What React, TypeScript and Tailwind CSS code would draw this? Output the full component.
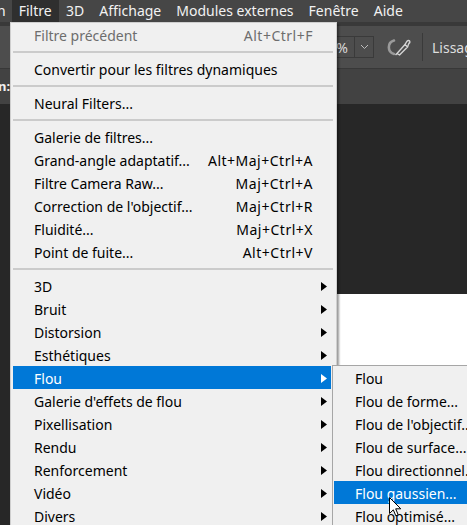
import React from 'react'

// Menu Filtre de Photoshop, sous-menu Flou ouvert

type Item =
    | { kind: 'sep' }
    | { kind: 'item'; label: string; shortcut?: string; sub?: boolean; disabled?: boolean; active?: boolean }

const mainItems: Item[] = [
    { kind: 'item', label: 'Filtre précédent', shortcut: 'Alt+Ctrl+F', disabled: true },
    { kind: 'sep' },
    { kind: 'item', label: 'Convertir pour les filtres dynamiques' },
    { kind: 'sep' },
    { kind: 'item', label: 'Neural Filters...' },
    { kind: 'sep' },
    { kind: 'item', label: 'Galerie de filtres...' },
    { kind: 'item', label: 'Grand-angle adaptatif...', shortcut: 'Alt+Maj+Ctrl+A' },
    { kind: 'item', label: 'Filtre Camera Raw...', shortcut: 'Maj+Ctrl+A' },
    { kind: 'item', label: "Correction de l'objectif...", shortcut: 'Maj+Ctrl+R' },
    { kind: 'item', label: 'Fluidité...', shortcut: 'Maj+Ctrl+X' },
    { kind: 'item', label: 'Point de fuite...', shortcut: 'Alt+Ctrl+V' },
    { kind: 'sep' },
    { kind: 'item', label: '3D', sub: true },
    { kind: 'item', label: 'Bruit', sub: true },
    { kind: 'item', label: 'Distorsion', sub: true },
    { kind: 'item', label: 'Esthétiques', sub: true },
    { kind: 'item', label: 'Flou', sub: true, active: true },
    { kind: 'item', label: "Galerie d'effets de flou", sub: true },
    { kind: 'item', label: 'Pixellisation', sub: true },
    { kind: 'item', label: 'Rendu', sub: true },
    { kind: 'item', label: 'Renforcement', sub: true },
    { kind: 'item', label: 'Vidéo', sub: true },
    { kind: 'item', label: 'Divers', sub: true },
]

const blurItems = [
    'Flou',
    'Flou de forme...',
    "Flou de l'objectif...",
    'Flou de surface...',
    'Flou directionnel...',
    'Flou gaussien...',
    'Flou optimisé...',
]

const menuBar = ['Filtre', '3D', 'Affichage', 'Modules externes', 'Fenêtre', 'Aide']

function SubArrow({ white }: { white?: boolean }) {
    return (
        <svg width="6" height="9" viewBox="0 0 6 9" className="mr-[4px] shrink-0">
            <polygon points="0,0 6,4.5 0,9" fill={white ? '#ffffff' : '#000000'} />
        </svg>
    )
}

function Cursor() {
    return (
        <svg width="13" height="20" viewBox="0 0 13 20" className="absolute left-[389px] top-[497px]">
            <path
                d="M0.5 0.5 L0.5 16.5 L4.3 12.8 L6.8 18.8 L9.2 17.8 L6.7 11.8 L11.8 11.8 Z"
                fill="#ffffff"
                stroke="#000000"
                strokeWidth="1"
                strokeLinejoin="miter"
            />
        </svg>
    )
}

function PressureIcon() {
    return (
        <svg width="24" height="18" viewBox="0 0 24 18" fill="none" className="shrink-0">
            <path d="M7 2.5 A7 7 0 0 0 7 16" stroke="#9a9a9a" strokeWidth="2.6" strokeLinecap="round" />
            <path d="M10 15.5 L18 6.5 L20.5 9 L12.5 17 Z" stroke="#d4d4d4" strokeWidth="1.4" strokeLinejoin="round" />
            <path d="M18 6.5 L20 3.2 Q21.5 1.8 22.6 3 Q23.4 4.3 21.8 5.6 L20.5 9" stroke="#d4d4d4" strokeWidth="1.4" />
            <path d="M8.5 17 L10 15.5" stroke="#d4d4d4" strokeWidth="1.4" />
        </svg>
    )
}

export default function App() {
    return (
        <div
            className="relative w-[467px] h-[525px] overflow-hidden bg-[#272727] flex flex-col"
            style={{ fontFamily: '"Noto Sans", "Open Sans", sans-serif' }}
        >
            {/* barre de menus */}
            <div className="h-[22px] shrink-0 bg-[#464646] flex items-stretch text-[14px] text-[#f2f2f2] leading-none whitespace-nowrap">
                <span className="ml-[-3px] mr-[6px] flex items-center shrink-0">n</span>
                {menuBar.map((m, i) => (
                    <span
                        key={m}
                        className={
                            i === 0
                                ? 'px-[7px] flex items-center shrink-0 bg-[#2f2f2f]'
                                : 'px-[7.5px] flex items-center shrink-0'
                        }
                    >
                        {m}
                    </span>
                ))}
            </div>
            <div className="h-[4px] shrink-0 bg-[#393939]" />

            {/* barre d'options */}
            <div className="h-[43px] shrink-0 bg-[#4d4d4d] border-b border-[#383838] flex items-center">
                <div className="ml-[300px] shrink-0 h-[22px] w-[55px] border border-[#3a3a3a] flex items-center justify-end pr-[6px] text-[14px] text-[#dcdcdc]">
                    %
                </div>
                <div className="shrink-0 h-[22px] w-[19px] border border-l-0 border-[#3a3a3a] flex items-center justify-center">
                    <svg width="9" height="6" viewBox="0 0 9 6" fill="none">
                        <path d="M1 1 L4.5 4.5 L8 1" stroke="#bdbdbd" strokeWidth="1" />
                    </svg>
                </div>
                <div className="ml-[13px] shrink-0 flex">
                    <PressureIcon />
                </div>
                <div className="ml-[11px] shrink-0 w-px h-[28px] bg-[#3a3a3a]" />
                <span className="ml-[9px] shrink-0 text-[14px] text-[#dedede] whitespace-nowrap">Lissage</span>
            </div>

            {/* onglets */}
            <div className="h-[35px] shrink-0 bg-[#424242] flex items-center">
                <span className="ml-[-2px] text-[13px] font-bold text-[#f0f0f0]">n:</span>
            </div>

            {/* zone de travail */}
            <div className="flex-1 bg-[#272727] pt-[190px] pl-[300px]">
                <div className="w-full h-full bg-white" />
            </div>

            {/* menu Filtre */}
            <div className="absolute left-[10px] top-[22px] w-[327px] h-[520px] bg-[#f0f0f0] border border-[#cfcfcf] shadow-[2px_2px_2px_rgba(0,0,0,0.4)] pl-[2px] pr-[5px] text-[14px] leading-none">
                {mainItems.map((it, i) =>
                    it.kind === 'sep' ? (
                        <div key={i} className="h-[11px] flex items-center mr-[-2px]">
                            <div className="w-full h-[2px] bg-[#cbcbcb]" />
                        </div>
                    ) : (
                        <div
                            key={i}
                            className={
                                'h-[23px] flex items-center pl-[21px] pt-[2px] whitespace-nowrap ' +
                                (it.active ? 'bg-[#0078d7] text-white' : it.disabled ? 'text-[#6d6d6d]' : 'text-black')
                            }
                        >
                            <span className="flex-1">{it.label}</span>
                            {it.shortcut && <span className="mr-[18px] tracking-[0.5px]">{it.shortcut}</span>}
                            {it.sub && <SubArrow white={it.active} />}
                        </div>
                    )
                )}
            </div>

            {/* sous-menu Flou */}
            <div className="absolute left-[332px] top-[365px] w-[170px] h-[170px] bg-[#f0f0f0] border border-[#a6a6a6] pl-[1px] text-[14px] leading-none">
                {blurItems.map((b, i) => (
                    <div
                        key={b}
                        className={
                            'h-[23px] flex items-center pl-[21px] pt-[2px] whitespace-nowrap ' +
                            (i === 5 ? 'bg-[#0078d7] text-white' : 'text-black')
                        }
                    >
                        {b}
                    </div>
                ))}
            </div>

            <Cursor />
        </div>
    )
}
